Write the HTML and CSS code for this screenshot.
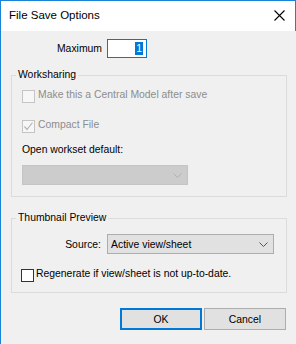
FILE: index.html
```html
<!DOCTYPE html>
<html>
<head>
<meta charset="utf-8">
<link rel="stylesheet" href="styles.css">
</head>
<body>
<div class="window">
  <div class="titlebar">
    <span class="title">File Save Options</span>
    <svg class="close" width="11" height="11" viewBox="0 0 11 11"><path d="M0.5 0.5L10.5 10.5M10.5 0.5L0.5 10.5" stroke="#000" stroke-width="1.1" fill="none"/></svg>
  </div>
  <div class="content">
    <div class="max-row">
      <span class="max-label">Maximum</span>
      <span class="max-input"><span class="sel">1</span></span>
    </div>
    <fieldset class="group group-ws">
      <legend>Worksharing</legend>
      <div class="check-row disabled row-central">
        <span class="box box-disabled"></span>
        <span class="check-text">Make this a Central Model after save</span>
      </div>
      <div class="check-row disabled row-compact">
        <span class="box box-disabled">
          <svg width="11" height="11" viewBox="0 0 11 11"><path d="M1.5 5.5L4 8.5L9.5 1.5" stroke="#b5b5b5" stroke-width="1.2" fill="none"/></svg>
        </span>
        <span class="check-text">Compact File</span>
      </div>
      <div class="ws-label">Open workset default:</div>
      <div class="select select-disabled">
        <svg class="chev" width="9" height="5" viewBox="0 0 9 5"><path d="M0.5 0.5L4.5 4.5L8.5 0.5" stroke="#b0b0b0" fill="none"/></svg>
      </div>
    </fieldset>
    <fieldset class="group group-tp">
      <legend>Thumbnail Preview</legend>
      <div class="source-row">
        <span class="source-label">Source:</span>
        <div class="select select-source">
          <span>Active view/sheet</span>
          <svg class="chev" width="9" height="5" viewBox="0 0 9 5"><path d="M0.5 0.5L4.5 4.5L8.5 0.5" stroke="#555" fill="none"/></svg>
        </div>
      </div>
      <div class="check-row row-regen">
        <span class="box box-normal"></span>
        <span class="check-text">Regenerate if view/sheet is not up-to-date.</span>
      </div>
    </fieldset>
    <div class="buttons">
      <button class="btn btn-ok">OK</button>
      <button class="btn">Cancel</button>
    </div>
  </div>
</div>
</body>
</html>
```

FILE: styles.css
```css
html, body {
  margin: 0;
  padding: 0;
  background: #f0f0f0;
}
body {
  font-family: "Liberation Sans", Arial, sans-serif;
  font-size: 10.4px;
  color: #000;
}
.window {
  width: 296px;
  height: 344px;
  box-sizing: border-box;
  border-left: 1px solid #1883d7;
  background: #f0f0f0;
  display: flex;
  flex-direction: column;
}
.titlebar {
  height: 31px;
  flex: none;
  box-sizing: border-box;
  background: #fff;
  border-top: 1px solid #1883d7;
  border-right: 1px solid #1883d7;
  display: flex;
  align-items: center;
  justify-content: space-between;
  padding: 0 10px 1px 8px;
}
.title {
  font-size: 11.5px;
  line-height: 13px;
}
.close {
  display: block;
}
.content {
  display: flex;
  flex-direction: column;
  padding: 8px 0 0 10px;
}
.max-row {
  display: flex;
  align-items: center;
  height: 19px;
}
.max-label {
  width: 91px;
  text-align: right;
}
.max-input {
  margin-left: 5px;
  width: 40px;
  height: 19px;
  box-sizing: border-box;
  border: 1px solid #0078d7;
  background: #fff;
  display: flex;
  justify-content: flex-end;
  align-items: center;
  padding-right: 3px;
}
.sel {
  background: #0078d7;
  color: #fff;
  line-height: 13px;
  padding: 0 1px;
}
.group {
  margin: 0;
  border: 1px solid #dcdcdc;
  padding: 0 0 0 10px;
  width: 276px;
  box-sizing: border-box;
  display: flex;
  flex-direction: column;
  align-items: flex-start;
}
.group legend {
  padding: 0 2px;
  margin-left: -6px;
  line-height: 14px;
}
.group-ws {
  margin-top: 10px;
  padding-bottom: 11px;
}
.check-row {
  display: flex;
  align-items: flex-start;
  gap: 3px;
  height: 13px;
}
.check-text {
  line-height: 13px;
  margin-top: -2px;
  white-space: nowrap;
}
.disabled {
  color: #8d8d8d;
}
.row-central {
  margin-top: 8px;
}
.row-compact {
  margin-top: 17px;
}
.box {
  width: 13px;
  height: 13px;
  flex: none;
  box-sizing: border-box;
  display: flex;
  align-items: center;
  justify-content: center;
}
.box-disabled {
  border: 1px solid #c4c4c4;
  background: #f7f7f7;
}
.box-normal {
  border: 1px solid #333;
  background: #fff;
}
.ws-label {
  margin-top: 10px;
  line-height: 14px;
}
.select {
  display: flex;
  align-items: center;
  justify-content: space-between;
  box-sizing: border-box;
}
.select-disabled {
  margin-top: 8px;
  width: 166px;
  height: 20px;
  background: #cccccc;
  border: 1px solid #c4c4c4;
  justify-content: flex-end;
  padding-right: 5px;
}
.group-tp {
  margin-top: 14px;
  padding-bottom: 10px;
}
.source-row {
  display: flex;
  align-items: center;
  margin-top: 9px;
}
.source-label {
  width: 79px;
  text-align: right;
}
.select-source {
  margin-left: 6px;
  width: 167px;
  height: 20px;
  background: #e1e1e1;
  border: 1px solid #adadad;
  padding: 0 5px 0 3px;
}
.row-regen {
  margin-top: 15px;
  margin-left: -1px;
  gap: 2px;
}
.buttons {
  display: flex;
  justify-content: flex-end;
  gap: 2px;
  margin-top: 15px;
  width: 275px;
}
.btn {
  width: 82px;
  height: 22px;
  box-sizing: border-box;
  background: #e1e1e1;
  border: 1px solid #adadad;
  font-family: "Liberation Sans", Arial, sans-serif;
  font-size: 10.4px;
  color: #000;
  padding: 0;
  margin: 0;
}
.btn-ok {
  border: 2px solid #0078d7;
}
```
